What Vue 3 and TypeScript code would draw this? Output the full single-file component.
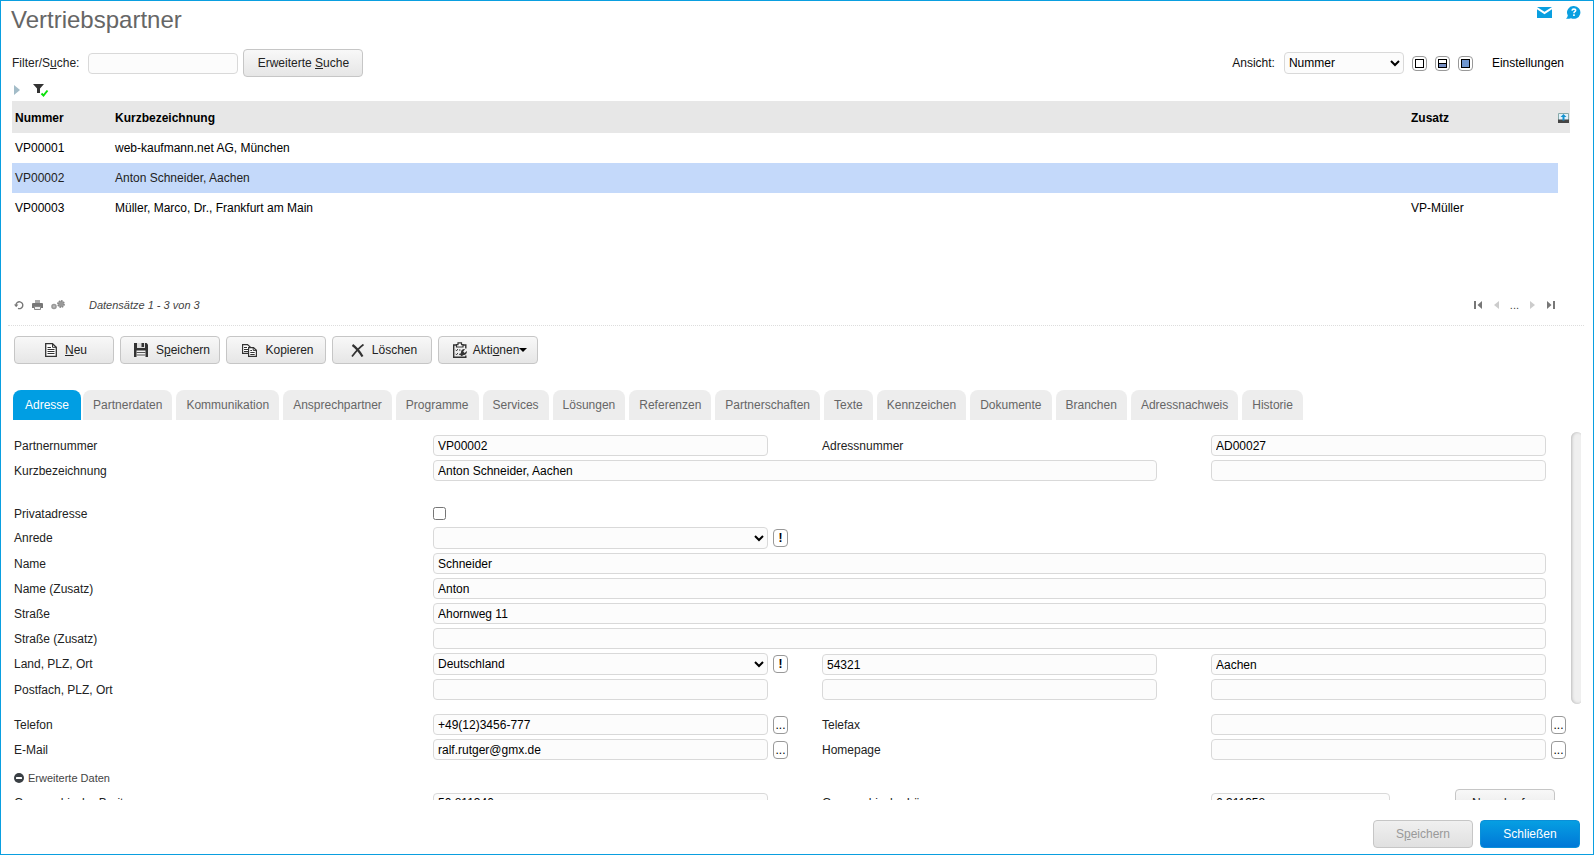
<script setup lang="ts">
import { ref } from 'vue'

interface Partner {
  id: string
  name: string
  extra: string
}

const partners: Partner[] = [
  { id: 'VP00001', name: 'web-kaufmann.net AG, München', extra: '' },
  { id: 'VP00002', name: 'Anton Schneider, Aachen', extra: '' },
  { id: 'VP00003', name: 'Müller, Marco, Dr., Frankfurt am Main', extra: 'VP-Müller' },
]
const selected = ref('VP00002')

const tabs = [
  'Adresse', 'Partnerdaten', 'Kommunikation', 'Ansprechpartner', 'Programme',
  'Services', 'Lösungen', 'Referenzen', 'Partnerschaften', 'Texte', 'Kennzeichen',
  'Dokumente', 'Branchen', 'Adressnachweis', 'Historie',
]
const activeTab = ref('Adresse')

const search = ref('')
const view = ref('Nummer')
const form = ref({
  number: 'VP00002',
  addressNumber: 'AD00027',
  shortName: 'Anton Schneider, Aachen',
  shortExtra: '',
  isPrivate: false,
  salutation: '',
  name: 'Schneider',
  nameExtra: 'Anton',
  street: 'Ahornweg 11',
  streetExtra: '',
  country: 'Deutschland',
  zip: '54321',
  city: 'Aachen',
  box: '',
  boxZip: '',
  boxCity: '',
  phone: '+49(12)3456-777',
  fax: '',
  mail: 'ralf.rutger@gmx.de',
  homepage: '',
  latitude: '50.811340',
  longitude: '6.311358',
})
</script>

<template>
  <div class="window">
    <header class="titlebar">
      <h1>Vertriebspartner</h1>
      <div class="title-icons">
        <button type="button" class="bare" aria-label="Nachricht">
          <svg width="15" height="11" viewBox="0 0 15 11">
            <path d="M0 0 L7.5 4.8 L15 0Z M0 2.2 L7.5 7.2 L15 2.2 V11 H0Z" fill="#0a9fe0" />
          </svg>
        </button>
        <button type="button" class="bare" aria-label="Hilfe">
          <svg width="15" height="13" viewBox="0 0 15 13">
            <path d="M8 0 A6.6 6.4 0 1 1 5 12.2 Q3 13 0 12.8 Q1.6 11.4 1.8 9.4 A6.6 6.4 0 0 1 8 0Z" fill="#0a9fe0" />
            <path d="M6 4.7 Q6.2 3 7.9 3 Q9.8 3.1 9.6 4.6 Q9.5 5.4 8.5 5.9 Q8 6.2 8 7.3" fill="none" stroke="#fff" stroke-width="1.6" />
            <rect x="7.1" y="8.3" width="1.7" height="1.7" fill="#fff" />
          </svg>
        </button>
      </div>
    </header>

    <div class="searchbar">
      <label for="search">Filter/S<u>u</u>che:</label>
      <input id="search" v-model="search" class="field search" type="text" />
      <button type="button" class="btn btn-search">Erweiterte&nbsp;<u>S</u>uche</button>
      <div class="view-tools">
        <label for="view">Ansicht:</label>
        <select id="view" v-model="view" class="field select view">
          <option>Nummer</option>
        </select>
        <button type="button" class="view-btn" aria-label="Nur Liste">
          <svg width="9" height="9" viewBox="0 0 9 9"><rect x=".5" y=".5" width="8" height="8" fill="#fff" stroke="#000" /></svg>
        </button>
        <button type="button" class="view-btn" aria-label="Geteilt">
          <svg width="9" height="9" viewBox="0 0 9 9"><rect x=".5" y=".5" width="8" height="8" fill="#fff" stroke="#000" /><rect x="1" y="5" width="7" height="3" fill="#7890c4" /><path d="M0 4.5H9" stroke="#000" /></svg>
        </button>
        <button type="button" class="view-btn" aria-label="Nur Detail">
          <svg width="9" height="9" viewBox="0 0 9 9"><rect x=".5" y=".5" width="8" height="8" fill="#6f96cf" stroke="#000" /></svg>
        </button>
        <a href="#" class="settings">Einstellungen</a>
      </div>
    </div>

    <div class="filterbar">
      <button type="button" class="bare" aria-label="Aufklappen">
        <svg width="6" height="10" viewBox="0 0 6 10"><path d="M0 0 L6 5 L0 10Z" fill="#a3bcc8" /></svg>
      </button>
      <button type="button" class="bare" aria-label="Filter">
        <svg width="16" height="13" viewBox="0 0 16 13">
          <path d="M0 0 H11 L7 4.5 V9 H4 V4.5Z" fill="#333" />
          <path d="M8.5 9.5 L10.5 11.5 L14.5 6.5" fill="none" stroke="#0be00b" stroke-width="2" />
        </svg>
      </button>
    </div>

    <section class="list">
      <table>
        <thead>
          <tr>
            <th class="c-no">Nummer</th>
            <th>Kurzbezeichnung</th>
            <th class="c-extra">Zusatz</th>
            <th class="c-tool">
              <button type="button" class="bare" aria-label="Export">
                <svg width="11" height="10" viewBox="0 0 11 10">
                  <path d="M.5 7V.5H10.5V7" fill="#e2f1fa" stroke="#8aa" />
                  <path d="M0 6.5H11V10H0Z" fill="#444" />
                  <path d="M5.5 1 L8.5 4 H6.5 V7.5 H4.5 V4 H2.5Z" fill="#1592cf" />
                </svg>
              </button>
            </th>
          </tr>
        </thead>
        <tbody>
          <tr v-for="p in partners" :key="p.id" :class="{ selected: p.id === selected }" @click="selected = p.id">
            <td>{{ p.id }}</td>
            <td>{{ p.name }}</td>
            <td>{{ p.extra }}</td>
            <td class="c-tool"></td>
          </tr>
        </tbody>
      </table>
    </section>

    <div class="pager">
      <div class="pager-tools">
        <button type="button" class="bare" aria-label="Aktualisieren">
          <svg width="10" height="10" viewBox="0 0 10 10">
            <path d="M2 5 A3.4 3.4 0 1 1 4 8.3" fill="none" stroke="#777" stroke-width="1.4" />
            <path d="M0 4.4 H4.4 L2.2 7.2Z" fill="#777" />
          </svg>
        </button>
        <button type="button" class="bare" aria-label="Drucken">
          <svg width="11" height="10" viewBox="0 0 11 10">
            <path d="M3 0 H8 V3 H3Z" fill="#aaa" />
            <path d="M0 4 Q0 3 1 3 H10 Q11 3 11 4 V8 H0Z" fill="#777" />
            <path d="M2.5 6.5 H8.5 V9.5 H2.5Z" fill="#eee" stroke="#888" />
          </svg>
        </button>
        <button type="button" class="bare" aria-label="Optionen">
          <svg width="14" height="10" viewBox="0 0 14 10">
            <circle cx="3" cy="6.5" r="2" fill="#bbb" stroke="#999" stroke-width="1.6" />
            <circle cx="10" cy="4" r="3" fill="#aaa" stroke="#888" stroke-width="1.8" stroke-dasharray="1.6 .7" />
            <circle cx="10" cy="4" r="2.2" fill="#999" />
          </svg>
        </button>
      </div>
      <span class="count">Datensätze 1 - 3 von 3</span>
      <nav class="pages" aria-label="Seiten">
        <button type="button" class="bare" aria-label="Erste Seite">
          <svg width="9" height="8" viewBox="0 0 9 8"><path d="M0 0H2V8H0Z M8 0V8L3.5 4Z" fill="#777" /></svg>
        </button>
        <button type="button" class="bare" aria-label="Zurück">
          <svg width="5" height="8" viewBox="0 0 5 8"><path d="M5 0V8L0 4Z" fill="#ccc" /></svg>
        </button>
        <span>...</span>
        <button type="button" class="bare" aria-label="Weiter">
          <svg width="5" height="8" viewBox="0 0 5 8"><path d="M0 0V8L5 4Z" fill="#ccc" /></svg>
        </button>
        <button type="button" class="bare" aria-label="Letzte Seite">
          <svg width="9" height="8" viewBox="0 0 9 8"><path d="M7 0H9V8H7Z M1 0V8L5.5 4Z" fill="#777" /></svg>
        </button>
      </nav>
    </div>

    <div class="actions">
      <button type="button" class="btn">
        <svg width="12" height="14" viewBox="0 0 12 14">
          <path d="M.7 .7 H7.5 L11.3 4.3 V13.3 H.7Z" fill="#fff" stroke="#333" stroke-width="1.3" />
          <path d="M7.5 .7 V4.3 H11.3 M2.5 4.5H6 M2.5 6.5H9.5 M2.5 8.5H9.5 M2.5 10.5H9.5" fill="none" stroke="#333" />
        </svg>
        <span><u>N</u>eu</span>
      </button>
      <button type="button" class="btn">
        <svg width="14" height="14" viewBox="0 0 14 14">
          <path d="M0 0 H12.5 L14 1.5 V14 H0Z" fill="#333" />
          <path d="M3 0H11V5H3Z" fill="#ddd" /><path d="M7.5 0H10V4H7.5Z" fill="#333" />
          <path d="M2.5 7.5H11.5V14H2.5Z" fill="#f2f2f2" />
          <path d="M2.5 9.5H11.5M2.5 12H11.5" stroke="#555" />
        </svg>
        <span>S<u>p</u>eichern</span>
      </button>
      <button type="button" class="btn">
        <svg width="15" height="13" viewBox="0 0 15 13">
          <path d="M.6 .6 H5.5 L8.2 3 V9.4 H.6Z" fill="#fff" stroke="#333" stroke-width="1.2" />
          <path d="M2 3.5H5 M2 5.5H6 M2 7.5H6" stroke="#333" />
          <path d="M6.6 3.6 H11.5 L14.4 6.2 V12.4 H6.6Z" fill="#fff" stroke="#333" stroke-width="1.2" />
          <path d="M11.2 3.6V6.4H14.4 M8.3 6.5H10 M8.3 8.5H12.7 M8.3 10.5H12.7" fill="none" stroke="#333" />
        </svg>
        <span>Kopieren</span>
      </button>
      <button type="button" class="btn">
        <svg width="13" height="13" viewBox="0 0 13 13">
          <path d="M1.5 1 Q7 5 11.5 12.5" fill="none" stroke="#333" stroke-width="2.2" />
          <path d="M12.5 .5 Q7 4.5 1 12.5" fill="none" stroke="#333" stroke-width="1.7" />
        </svg>
        <span>Löschen</span>
      </button>
      <button type="button" class="btn btn-menu">
        <svg width="14" height="16" viewBox="0 0 14 16">
          <path d="M12.8 6.5V3H.7V15.3H12.8V13.5" fill="none" stroke="#333" stroke-width="1.4" />
          <path d="M3.5 5V2.6H5V.8H8.5V2.6H10V5Z" fill="#fff" stroke="#333" stroke-width="1.2" />
          <path d="M2.6 7.8L3.6 8.8L4.8 7.1M2.6 11.8L3.6 12.8L4.8 11.1M6 8H7.5M6 12.3H7.3" fill="none" stroke="#333" />
          <path d="M12 7.2A3.2 3.2 0 0 0 8 10.6L6.8 12.4L8.6 14.2L10.6 13A3.2 3.2 0 0 0 13.8 9L11.6 11L10.2 9.6Z" fill="#333" />
        </svg>
        <span class="menu-label">Akti<u>o</u>nen<svg width="8" height="4" viewBox="0 0 8 4"><path d="M0 0H8L4 4Z" fill="#000" /></svg></span>
      </button>
    </div>

    <nav class="tabs" role="tablist">
      <button
        v-for="t in tabs" :key="t" type="button" role="tab" class="tab"
        :class="{ active: t === activeTab }" :aria-selected="t === activeTab" @click="activeTab = t"
      >{{ t }}</button>
    </nav>

    <main class="panel">
      <form class="form" @submit.prevent>
        <div class="row">
          <label for="number">Partnernummer</label>
          <input id="number" v-model="form.number" class="field" type="text" />
          <label for="addressNumber">Adressnummer</label>
          <input id="addressNumber" v-model="form.addressNumber" class="field" type="text" />
        </div>
        <div class="row">
          <label for="shortName">Kurzbezeichnung</label>
          <input id="shortName" v-model="form.shortName" class="field span2" type="text" />
          <input v-model="form.shortExtra" class="field" type="text" aria-label="Zusatz" />
        </div>
        <div class="row row-check">
          <label for="private">Privatadresse</label>
          <input id="private" v-model="form.isPrivate" class="check" type="checkbox" />
        </div>
        <div class="row">
          <label for="salutation">Anrede</label>
          <div class="with-btn">
            <select id="salutation" v-model="form.salutation" class="field select">
              <option value=""></option>
              <option>Herr</option>
              <option>Frau</option>
            </select>
            <button type="button" class="mini strong" aria-label="Anrede prüfen">!</button>
          </div>
        </div>
        <div class="row">
          <label for="name">Name</label>
          <input id="name" v-model="form.name" class="field span3" type="text" />
        </div>
        <div class="row">
          <label for="nameExtra">Name (Zusatz)</label>
          <input id="nameExtra" v-model="form.nameExtra" class="field span3" type="text" />
        </div>
        <div class="row">
          <label for="street">Straße</label>
          <input id="street" v-model="form.street" class="field span3" type="text" />
        </div>
        <div class="row">
          <label for="streetExtra">Straße (Zusatz)</label>
          <input id="streetExtra" v-model="form.streetExtra" class="field span3" type="text" />
        </div>
        <div class="row row-end">
          <label for="country">Land, PLZ, Ort</label>
          <div class="with-btn">
            <select id="country" v-model="form.country" class="field select">
              <option>Deutschland</option>
            </select>
            <button type="button" class="mini strong" aria-label="Land prüfen">!</button>
          </div>
          <input v-model="form.zip" class="field" type="text" aria-label="PLZ" />
          <input v-model="form.city" class="field" type="text" aria-label="Ort" />
        </div>
        <div class="row">
          <label for="box">Postfach, PLZ, Ort</label>
          <input id="box" v-model="form.box" class="field" type="text" />
          <input v-model="form.boxZip" class="field" type="text" aria-label="Postfach PLZ" />
          <input v-model="form.boxCity" class="field" type="text" aria-label="Postfach Ort" />
        </div>
        <div class="row row-group">
          <label for="phone">Telefon</label>
          <div class="with-btn">
            <input id="phone" v-model="form.phone" class="field" type="text" />
            <button type="button" class="mini" aria-label="Telefon wählen">...</button>
          </div>
          <label for="fax">Telefax</label>
          <div class="with-btn">
            <input id="fax" v-model="form.fax" class="field" type="text" />
            <button type="button" class="mini" aria-label="Telefax wählen">...</button>
          </div>
        </div>
        <div class="row">
          <label for="mail">E-Mail</label>
          <div class="with-btn">
            <input id="mail" v-model="form.mail" class="field" type="text" />
            <button type="button" class="mini" aria-label="E-Mail senden">...</button>
          </div>
          <label for="homepage">Homepage</label>
          <div class="with-btn">
            <input id="homepage" v-model="form.homepage" class="field" type="text" />
            <button type="button" class="mini" aria-label="Homepage öffnen">...</button>
          </div>
        </div>
        <button type="button" class="bare expander">
          <svg width="10" height="10" viewBox="0 0 10 10"><circle cx="5" cy="5" r="5" fill="#3a3f44" /><rect x="2" y="4" width="6" height="2" rx=".5" fill="#fff" /></svg>
          Erweiterte Daten
        </button>
        <div class="row">
          <label for="latitude">Geographische Breite</label>
          <input id="latitude" v-model="form.latitude" class="field" type="text" />
          <label for="longitude">Geographische Länge</label>
          <div class="geo">
            <input id="longitude" v-model="form.longitude" class="field" type="text" />
            <button type="button" class="btn">Neu abrufen</button>
          </div>
        </div>
      </form>
      <div class="scroll"><div class="thumb"></div></div>
    </main>

    <footer class="footer">
      <button type="button" class="btn" disabled>S<u>p</u>eichern</button>
      <button type="button" class="btn primary">Schließen</button>
    </footer>
  </div>
</template>

<style>
html, body { margin: 0; background: #fff; }
</style>

<style scoped>
.window {
  box-sizing: border-box;
  height: 100vh;
  display: flex;
  flex-direction: column;
  border: 1px solid #0a9fe0;
  background: #fff;
  color: #222;
  font: 12px/16px "Liberation Sans", Arial, sans-serif;
  overflow: hidden;
}
button, input, select { font: inherit; color: inherit; box-sizing: border-box; }
button { cursor: pointer; padding: 0; }
svg { display: block; flex: none; }
.bare { border: 0; background: none; display: flex; align-items: center; }

.titlebar {
  display: flex;
  justify-content: space-between;
  align-items: flex-start;
  height: 48px;
  padding: 0 12px 0 10px;
}
h1 { margin: 5px 0 0; font-size: 24px; line-height: 28px; font-weight: 400; color: #666; }
.title-icons { display: flex; gap: 14px; margin-top: 5px; }

.searchbar { display: flex; align-items: center; height: 28px; padding-left: 11px; }
.field {
  height: 21px;
  width: 100%;
  min-width: 0;
  padding: 0 4px;
  border: 1px solid #d9d9d9;
  border-radius: 4px;
  background: #fcfcfc;
  color: #000;
}
.select { height: 22px; padding: 0; }
.search { width: 150px; margin: 0 5px 0 9px; }
.btn {
  display: flex;
  align-items: center;
  justify-content: center;
  gap: 8px;
  width: 100px;
  height: 28px;
  border: 1px solid #c6c6c6;
  border-radius: 4px;
  background: linear-gradient(#f8f8f8, #e6e6e6);
  color: #222;
  white-space: nowrap;
}
.btn-search { width: 120px; gap: 0; }
.view-tools { display: flex; align-items: center; margin: 0 29px 0 auto; color: #111; }
.view { width: 120px; margin: 0 8px 0 9px; }
.view-btn {
  display: grid;
  place-items: center;
  width: 15px;
  height: 15px;
  margin-right: 8px;
  border: 1px solid #999;
  border-radius: 4px;
  background: #fff;
}
.settings { margin-left: 11px; color: #000; text-decoration: none; }

.filterbar { display: flex; gap: 13px; height: 24px; align-items: center; padding: 2px 0 0 13px; box-sizing: border-box; }

.list { height: 188px; padding: 0 23px 0 11px; }
table { width: 100%; border-collapse: collapse; table-layout: fixed; color: #000; }
th { height: 30px; padding: 2px 0 0 3px; background: #e7e7e7; text-align: left; }
td { height: 30px; padding: 0 0 0 3px; }
.c-no { width: 97px; }
.c-extra { width: 147px; }
th.c-tool { width: 12px; padding: 2px 0 0; }
td.c-tool { background: #fff; padding: 0; }
.selected td { background: #c4d9fa; color: #222; }
.selected td.c-tool { background: #fff; }

.pager {
  display: flex;
  align-items: center;
  height: 32px;
  padding: 0 29px 4px 6px;
  margin: 0 9px 0 7px;
  border-bottom: 1px dotted #ddd;
}
.pager-tools { display: flex; gap: 8px; width: 75px; }
.count { font-size: 11px; font-style: italic; color: #444; }
.pages { display: flex; align-items: center; gap: 11px; margin-left: auto; font-size: 11px; color: #444; }

.actions { display: flex; gap: 6px; padding: 10px 13px 0; }
.actions .btn { padding-left: 4px; }
.actions .btn-menu { gap: 6px; }
.menu-label { display: flex; align-items: center; }

.tabs { display: flex; gap: 4px; margin-top: 26px; padding: 0 12px; }
.tab {
  height: 30px;
  padding: 0 10px;
  border: 0;
  border-radius: 8px 8px 0 0;
  background: #ededed;
  color: #666;
}
.tab.active { padding: 0 12px; margin-right: -2px; background: #009ee3; color: #fff; }

.panel { display: flex; flex: 1; min-height: 0; padding: 12px 12px 0 13px; overflow: hidden; }
.form {
  flex: 1;
  min-width: 0;
  display: flex;
  flex-direction: column;
  gap: 4px;
  padding-top: 3px;
}
.row {
  flex: none;
  display: grid;
  grid-template-columns: 365fr 335fr 335fr 335fr;
  column-gap: 54px;
  align-items: center;
  padding-right: 25px;
}
.row-check { margin-top: 19px; height: 19px; }
.row-end { align-items: end; }
.row-end label { align-self: center; }
.row-group { margin-top: 10px; }
.check { width: 13px; height: 13px; margin: 0; }
.span2 { grid-column: span 2; }
.span3 { grid-column: span 3; }
.with-btn { display: flex; align-items: center; gap: 5px; margin-right: -20px; }
.mini {
  flex: none;
  width: 15px;
  height: 18px;
  border: 1px solid #999;
  border-radius: 4px;
  background: #fff;
  color: #000;
  line-height: 16px;
}
.strong { font-weight: 700; }
.expander { gap: 4px; margin-top: 7px; height: 14px; align-self: flex-start; font-size: 11px; color: #444; }
.geo { display: flex; align-items: center; justify-content: space-between; margin-right: -9px; }
.geo .field { width: 52%; }
.scroll { width: 10px; overflow: hidden; }
.thumb {
  width: 12px;
  height: 272px;
  border-radius: 6px;
  background: #efefef;
  box-shadow: inset 1px 0 3px #bbb;
}

.footer { display: flex; justify-content: flex-end; gap: 7px; padding: 20px 13px 6px; }
.footer .btn { gap: 0; }
.btn:disabled { background: linear-gradient(#f0f0f0, #e0e0e0); color: #999; }
.primary { border-color: #0a8fd8; background: linear-gradient(#069fe2, #0078d7); color: #fff; }
</style>
